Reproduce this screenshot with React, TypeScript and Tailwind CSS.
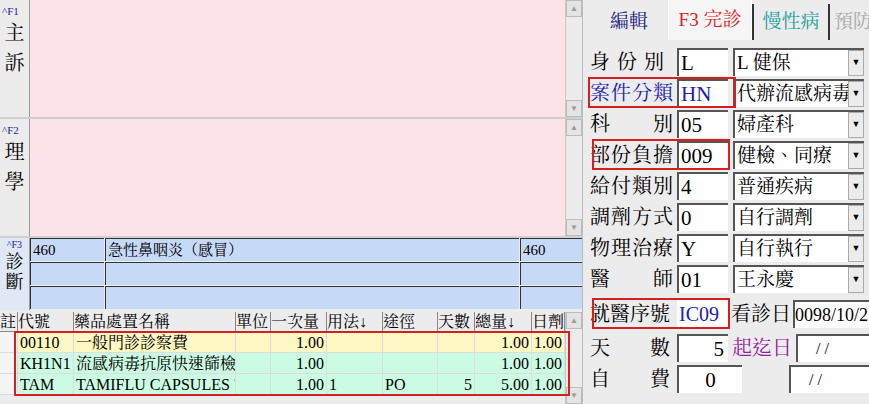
const F = { fontFamily: '"Liberation Serif", "Noto Serif CJK TC", "Noto Sans CJK TC", serif' };

const Scroll = ({ h }: { h: string }) => (
  <div className={`w-[17px] ${h} bg-[#ececec] border-l border-[#c8c8c8] flex flex-col justify-between`}>
    <div className="h-[17px] border border-[#bbb] bg-[#e4e4e4] text-[8px] text-[#999] flex items-center justify-center">▲</div>
    <div className="h-[17px] border border-[#bbb] bg-[#e4e4e4] text-[8px] text-[#999] flex items-center justify-center">▼</div>
  </div>
);

const TextSec = ({ k, a, b }: { k: string; a: string; b: string }) => (
  <div className="flex h-[119px] border-b-2 border-[#d0d0d0]">
    <div className="w-[30px] bg-[#ececec] border-r border-[#999] flex flex-col items-center text-[20px] leading-[30px]">
      <span className="text-[11px] leading-[14px] text-[#1a1aa0] self-start pl-[2px] pt-[4px]">^{k}</span>
      <span>{a}</span>
      <span>{b}</span>
    </div>
    <div className="flex-1 bg-[#fde2e7]" />
    <Scroll h="h-full" />
  </div>
);

const DiagRow = ({ c1, c2, c3 }: { c1?: string; c2?: string; c3?: string }) => (
  <div className="flex h-[24px] border-b border-[#eee]">
    <div className="w-[74px] bg-[#c6d9f7] border-l border-t border-[#333] px-[2px] text-[15px]">{c1}</div>
    <div className="w-[414px] bg-[#c6d9f7] border-l border-t border-[#333] ml-[1px] px-[2px] text-[15px]">{c2}</div>
    <div className="flex-1 bg-[#c6d9f7] border-l border-t border-[#333] ml-[1px] px-[2px] text-[15px]">{c3}</div>
  </div>
);

const cols = [18, 56, 162, 35, 56, 56, 55, 37, 57, 33];
const heads = ["註", "代號", "藥品處置名稱", "單位", "一次量", "用法↓", "途徑", "天數", "總量↓", "日劑"];
const right = [false, false, false, false, true, false, false, true, true, false];
const rows = [
  { bg: "bg-[#fdf7c3]", c: ["", "00110", "一般門診診察費", "", "1.00", "", "", "", "1.00", "1.00"] },
  { bg: "bg-[#ccfbe4]", c: ["", "KH1N1", "流感病毒抗原快速篩檢", "", "1.00", "", "", "", "1.00", "1.00"] },
  { bg: "bg-[#ccfbe4]", c: ["", "TAM", "TAMIFLU CAPSULES 75", "", "1.00", "1", "PO", "5", "5.00", "1.00"] },
];

const Field = ({ label, code, sel, lc = "text-black", cc = "text-black", boxL, boxW }: any) => (
  <div className="relative flex items-center h-[31px]">
    <div className={`w-[87px] text-[20px] leading-[24px] whitespace-nowrap tracking-[1px] ${lc}`}>{label}</div>
    <div className={`w-[51px] h-[28px] bg-white border-t-2 border-l-2 border-[#555] text-[21px] leading-[26px] px-[2px] ${cc}`}>{code}</div>
    {sel && (
      <div className="ml-[5px] w-[131px] h-[28px] bg-white border-t-2 border-l-2 border-[#555] flex">
        <div className="flex-1 text-[19px] leading-[26px] px-[2px] whitespace-nowrap overflow-hidden">{sel}</div>
        <div className="w-[16px] bg-[#ececec] border border-[#aaa] text-[9px] flex items-center justify-center">▼</div>
      </div>
    )}
    {boxL !== undefined && (
      <div className="absolute top-0 h-[31px] border-2 border-[#d42020]" style={{ left: boxL, width: boxW }} />
    )}
  </div>
);

export default function App() {
  return (
    <div className="w-[869px] h-[404px] overflow-hidden flex bg-[#ececec]" style={F}>
      <div className="w-[583px] flex flex-col">
        <TextSec k="F1" a="主" b="訴" />
        <TextSec k="F2" a="理" b="學" />
        <div className="flex h-[74px] pb-[2px]">
          <div className="w-[30px] bg-[#dfe8f5] border-r border-[#999] flex flex-col items-center text-[18px] leading-[20px]">
            <span className="text-[10px] leading-[14px] text-[#1a1aa0]">^F3</span>
            <span>診</span>
            <span>斷</span>
          </div>
          <div className="flex-1 flex flex-col">
            <DiagRow c1="460" c2="急性鼻咽炎（感冒）" c3="460" />
            <DiagRow />
            <DiagRow />
          </div>
        </div>
        <div className="relative flex-1 flex">
          <div className="flex-1 flex flex-col">
            <div className="flex h-[20px] bg-[#ececec] border-b border-[#888]">
              {heads.map((h, i) => (
                <div key={i} className="border-r border-[#888] text-[16px] leading-[20px] whitespace-nowrap overflow-hidden" style={{ width: cols[i] }}>{h}</div>
              ))}
            </div>
            {rows.map((r, j) => (
              <div key={j} className="flex h-[21px]">
                {r.c.map((v, i) => (
                  <div key={i} className={`${i === 0 ? "bg-[#f4f4f4]" : r.bg} border-r border-b border-[#ddd] text-[16px] leading-[21px] px-[2px] whitespace-nowrap overflow-hidden ${right[i] ? "text-right" : ""}`} style={{ width: cols[i] }}>{v}</div>
                ))}
              </div>
            ))}
          </div>
          <Scroll h="h-full" />
          <div className="absolute left-[14px] top-[19px] w-[556px] h-[65px] border-2 border-[#d42020]" />
        </div>
      </div>
      <div className="flex-1 flex flex-col pl-[7px] border-l border-[#bbb]">
        <div className="flex h-[40px] items-end text-[19px]">
          <div className="w-[78px] h-[36px] flex items-center justify-center text-[#1a1a80]">編輯</div>
          <div className="w-[84px] h-[40px] flex items-center justify-center text-[#e02020] bg-[#f6f6f6] border-l border-r border-white">F3 完診</div>
          <div className="w-[78px] h-[36px] flex items-center justify-center text-[#18a0a0] border-l-2 border-r-2 border-[#333]">慢性病</div>
          <div className="flex-1 h-[36px] flex items-center pl-[4px] text-[#aaa] whitespace-nowrap overflow-hidden">預防</div>
        </div>
        <div className="flex flex-col pt-[6px]">
          <Field label="身 份 別" code="L" sel="L 健保" />
          <Field label="案件分類" code="HN" sel="代辦流感病毒" lc="text-[#2020b0]" cc="text-[#2020b0]" boxL={-2} boxW={148} />
          <Field label="科　　別" code="05" sel="婦產科" />
          <Field label="部份負擔" code="009" sel="健檢、同療" boxL={2} boxW={138} />
          <Field label="給付類別" code="4" sel="普通疾病" />
          <Field label="調劑方式" code="0" sel="自行調劑" />
          <Field label="物理治療" code="Y" sel="自行執行" />
          <Field label="醫　　師" code="01" sel="王永慶" />
          <div className="relative flex items-center h-[36px] pt-[4px]">
            <div className="w-[87px] text-[20px] whitespace-nowrap">就醫序號</div>
            <div className="w-[51px] h-[28px] bg-white text-[20px] leading-[28px] px-[2px] text-[#2020b0]">IC09</div>
            <div className="ml-[3px] text-[20px] whitespace-nowrap">看診日</div>
            <div className="ml-[2px] flex-1 h-[28px] bg-white border-t-2 border-l-2 border-[#555] text-[18px] leading-[26px] whitespace-nowrap overflow-hidden">0098/10/2</div>
            <div className="absolute left-[2px] top-[4px] w-[138px] h-[31px] border-2 border-[#d42020]" />
          </div>
          <div className="flex items-center h-[31px] mt-[2px]">
            <div className="w-[87px] text-[20px]">天　　數</div>
            <div className="w-[51px] h-[28px] bg-white border-t-2 border-l-2 border-[#555] text-[21px] text-right pr-[4px] leading-[26px]">5</div>
            <div className="ml-[4px] text-[20px] text-[#9020a0]">起迄日</div>
            <div className="ml-[4px] flex-1 h-[28px] bg-white border-t-2 border-l-2 border-[#555] text-[16px] pl-[18px] leading-[26px]">/ /</div>
          </div>
          <div className="flex items-center h-[31px]">
            <div className="w-[87px] text-[20px]">自　　費</div>
            <div className="w-[65px] h-[28px] bg-white border-t-2 border-l-2 border-[#555] text-[21px] text-center leading-[26px]">0</div>
            <div className="ml-[47px] flex-1 h-[28px] bg-white border-t-2 border-l-2 border-[#555] text-[16px] pl-[18px] leading-[26px]">/ /</div>
          </div>
        </div>
      </div>
    </div>
  );
}
